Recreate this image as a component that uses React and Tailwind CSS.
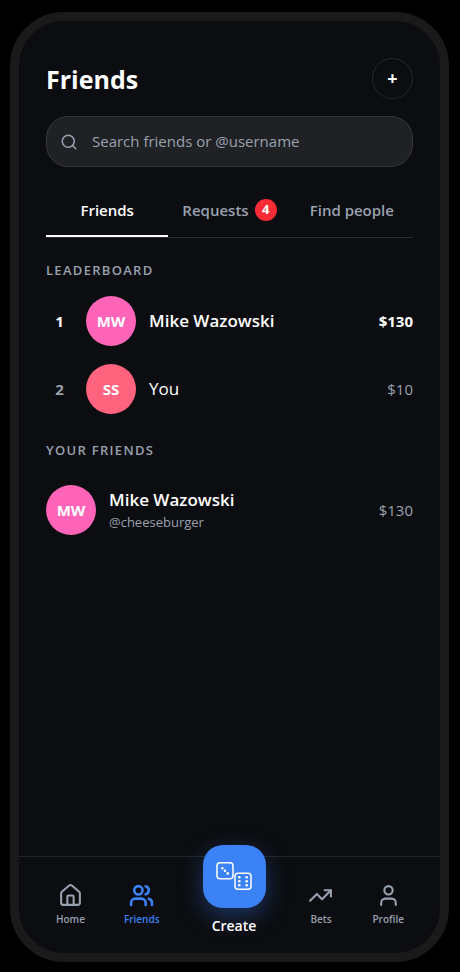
import React, { useState } from 'react';
import { Search, House, Users, TrendingUp, User } from 'lucide-react';

const leaderboard = [
  { rank: 1, name: 'Mike Wazowski', initials: 'MW', color: 'bg-[#ff64b8]', amount: '$130' },
  { rank: 2, name: 'You', initials: 'SS', color: 'bg-[#ff637e]', amount: '$10' },
];

const friends = [
  { name: 'Mike Wazowski', username: '@cheeseburger', initials: 'MW', color: 'bg-[#ff64b8]', amount: '$130' },
];

const tabs = [
  { id: 'friends', label: 'Friends' },
  { id: 'requests', label: 'Requests', count: 4 },
  { id: 'find', label: 'Find people' },
];

const Avatar = ({ initials, color }) => (
  <div className={`flex size-[50px] shrink-0 items-center justify-center rounded-full text-[15px] font-bold text-white ${color}`}>
    {initials}
  </div>
);

const SectionTitle = ({ children }) => (
  <h2 className="text-[13px] leading-5 font-semibold tracking-widest text-gray-400 uppercase">{children}</h2>
);

const NavItem = ({ icon: Icon, label, active }) => (
  <a
    href="#"
    aria-current={active ? 'page' : undefined}
    className={`flex flex-col items-center gap-[3px] text-[10px] leading-4 font-semibold ${active ? 'text-[#3b82f6]' : 'text-gray-400'}`}
  >
    <Icon size={25} strokeWidth={active ? 2.5 : 2} />
    {label}
  </a>
);

const DiceIcon = () => (
  <svg width="36" height="28" viewBox="0 0 36 28" fill="none" stroke="currentColor" strokeWidth="1.5">
    <rect x="1" y="0.8" width="16" height="16" rx="3" />
    <rect x="19" y="11.2" width="16" height="16" rx="3" />
    <g fill="currentColor" stroke="none">
      <circle cx="6.3" cy="6.2" r="1.3" />
      <circle cx="9" cy="8.8" r="1.3" />
      <circle cx="11.7" cy="11.4" r="1.3" />
      <circle cx="23.3" cy="15.2" r="1.3" />
      <circle cx="23.3" cy="19.2" r="1.3" />
      <circle cx="23.3" cy="23.2" r="1.3" />
      <circle cx="30.7" cy="15.2" r="1.3" />
      <circle cx="30.7" cy="19.2" r="1.3" />
      <circle cx="30.7" cy="23.2" r="1.3" />
    </g>
  </svg>
);

const App = () => {
  const [activeTab, setActiveTab] = useState('friends');
  const [query, setQuery] = useState('');

  return (
    <div className="flex min-h-screen bg-black pt-3 pr-[11px] pb-[10px] pl-[10px] font-['Open_Sans',sans-serif]">
      <div className="flex flex-1 flex-col rounded-[54px] border-[9px] border-[#1a1a1a] bg-[#0c0d10] text-white">
        <main className="flex-1 px-[27px] pt-9">
          <header className="flex items-center justify-between">
            <h1 className="pt-[2px] text-[25px] leading-10 font-bold">Friends</h1>
            <button
              type="button"
              aria-label="Add friend"
              className="flex size-[41px] items-center justify-center rounded-full border border-[#26272a] text-lg font-bold"
            >
              +
            </button>
          </header>

          {/* Search */}
          <label className="mt-[17px] flex h-[51px] items-center gap-[14px] rounded-[22px] border border-[#36373a] bg-[#202124] px-[13px]">
            <Search size={18} className="shrink-0 text-gray-400" />
            <input
              type="text"
              aria-label="Search friends"
              value={query}
              onChange={(e) => setQuery(e.target.value)}
              placeholder="Search friends or @username"
              className="w-full bg-transparent text-[15px] outline-none placeholder:text-gray-400"
            />
          </label>

          {/* Tabs */}
          <div role="tablist" className="mt-[18px] grid grid-cols-3 border-b border-[#2a2b2e]">
            {tabs.map((tab) => (
              <button
                key={tab.id}
                type="button"
                role="tab"
                aria-selected={activeTab === tab.id}
                onClick={() => setActiveTab(tab.id)}
                className={`flex h-[52px] items-center justify-center gap-1.5 border-b-2 text-[15px] font-semibold whitespace-nowrap ${
                  activeTab === tab.id ? 'border-white text-white' : 'border-transparent text-gray-400'
                }`}
              >
                {tab.label}
                {tab.count && (
                  <span className="flex size-[22px] items-center justify-center rounded-full bg-[#fb2c36] text-[13px] font-bold text-white">
                    {tab.count}
                  </span>
                )}
              </button>
            ))}
          </div>

          {/* Leaderboard */}
          <section className="mt-[22px]">
            <SectionTitle>Leaderboard</SectionTitle>
            <ol className="mt-4 flex flex-col gap-[18px]">
              {leaderboard.map((row) => (
                <li key={row.rank} className="flex items-center gap-[13px]">
                  <span className={`w-[27px] text-center text-[15px] font-bold ${row.rank === 1 ? 'text-white' : 'text-gray-400'}`}>
                    {row.rank}
                  </span>
                  <Avatar initials={row.initials} color={row.color} />
                  <span className={`flex-1 text-[17px] ${row.rank === 1 ? 'font-semibold' : ''}`}>{row.name}</span>
                  <span className={`text-[15px] ${row.rank === 1 ? 'font-bold' : 'text-gray-400'}`}>{row.amount}</span>
                </li>
              ))}
            </ol>
          </section>

          {/* Friends list */}
          <section className="mt-[26px]">
            <SectionTitle>Your friends</SectionTitle>
            <ul className="mt-[25px]">
              {friends.map((friend) => (
                <li key={friend.username} className="flex items-center gap-[13px]">
                  <Avatar initials={friend.initials} color={friend.color} />
                  <div className="flex-1">
                    <p className="text-[17px] leading-6 font-semibold">{friend.name}</p>
                    <p className="text-[13px] leading-5 text-gray-400">{friend.username}</p>
                  </div>
                  <span className="text-[15px] text-gray-400">{friend.amount}</span>
                </li>
              ))}
            </ul>
          </section>
        </main>

        <nav className="flex h-[97px] items-center justify-between border-t border-[#242528] pr-9 pl-[37px]">
          <NavItem icon={House} label="Home" />
          <NavItem icon={Users} label="Friends" active />
          <a href="#" className="mb-[30px] flex flex-col items-center gap-2 px-1 text-[14px] leading-5 font-semibold">
            <span className="flex size-[63px] items-center justify-center rounded-[20px] bg-[#3b82f6] shadow-[0_8px_24px_rgba(59,130,246,0.35)]">
              <DiceIcon />
            </span>
            Create
          </a>
          <NavItem icon={TrendingUp} label="Bets" />
          <NavItem icon={User} label="Profile" />
        </nav>
      </div>
    </div>
  );
};

export default App;
